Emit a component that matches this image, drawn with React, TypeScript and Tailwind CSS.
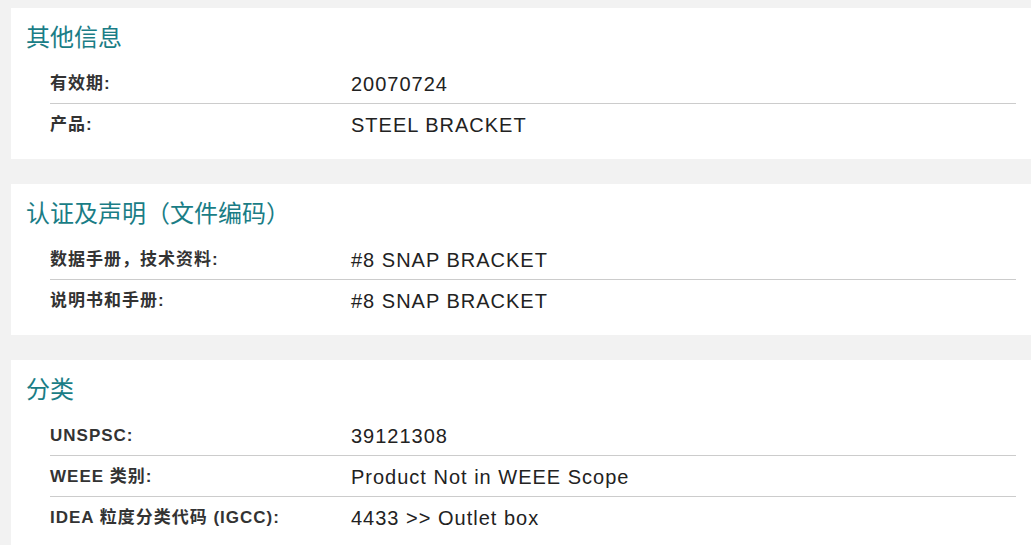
import React from "react";

type Row = { label: string; value: string };
type Section = { title: string; rows: Row[] };

const sections: Section[] = [
  {
    title: "其他信息",
    rows: [
      { label: "有效期:", value: "20070724" },
      { label: "产品:", value: "STEEL BRACKET" },
    ],
  },
  {
    title: "认证及声明（文件编码）",
    rows: [
      { label: "数据手册，技术资料:", value: "#8 SNAP BRACKET" },
      { label: "说明书和手册:", value: "#8 SNAP BRACKET" },
    ],
  },
  {
    title: "分类",
    rows: [
      { label: "UNSPSC:", value: "39121308" },
      { label: "WEEE 类别:", value: "Product Not in WEEE Scope" },
      { label: "IDEA 粒度分类代码 (IGCC):", value: "4433 >> Outlet box" },
    ],
  },
];

const font = "font-['Liberation_Sans','Noto_Sans_CJK_SC',sans-serif]";

const Card: React.FC<{ section: Section }> = ({ section }) => (
  <section className="bg-white ml-[11px] pt-[15px] pb-[14px]">
    <h2 className="pl-[15px] text-[24px] leading-[30px] text-[#1a7d86] mb-[10px]">{section.title}</h2>
    <div className="pl-[39px] pr-[15px]">
      {section.rows.map((r, i) => (
        <div
          key={r.label}
          className={`flex items-center h-[41px] pt-[1px] ${i < section.rows.length - 1 ? "border-b border-[#cccccc]" : ""}`}
        >
          <div className="w-[301px] shrink-0 text-[17px] font-bold tracking-[1px] text-[#333333]">{r.label}</div>
          <div className="text-[20px] tracking-[1px] text-[#222222]">{r.value}</div>
        </div>
      ))}
    </div>
  </section>
);

export default function App() {
  return (
    <div className={`min-h-[545px] bg-[#f2f2f2] pt-[8px] flex flex-col gap-[25px] ${font}`}>
      {sections.map((s) => (
        <Card key={s.title} section={s} />
      ))}
    </div>
  );
}
